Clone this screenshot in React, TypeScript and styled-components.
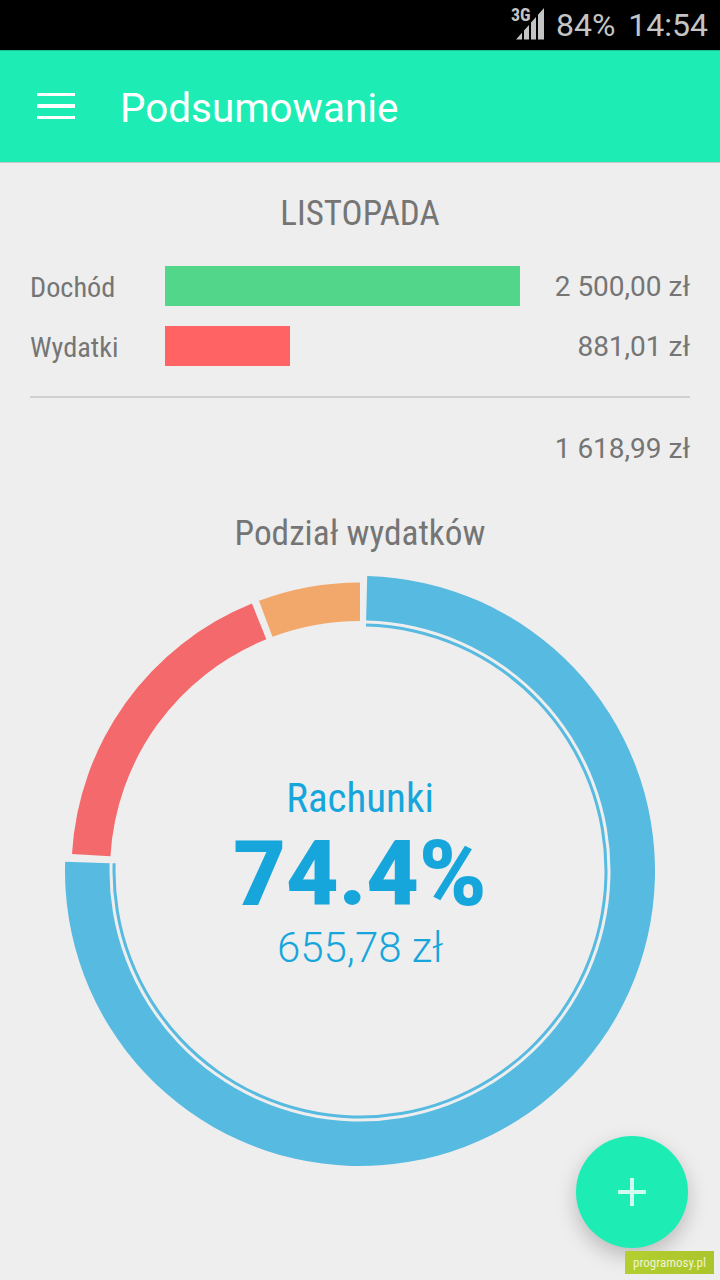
import React from "react";
import styled, { createGlobalStyle } from "styled-components";

const Global = createGlobalStyle`
  html, body { margin: 0; padding: 0; background: #eeeeee; }
  body { font-family: Roboto, "Liberation Sans", sans-serif; }
`;

const Screen = styled.div`
  position: relative;
  width: 720px;
  height: 1280px;
  overflow: hidden;
  background: #eeeeee;
  display: flex;
  flex-direction: column;
`;

const StatusBar = styled.div`
  height: 50px;
  background: #000;
  color: #c4c4c4;
  display: flex;
  align-items: center;
  justify-content: flex-end;
  padding-right: 12px;
  font-size: 32px;
  flex: none;
`;
const StatusGroup = styled.div`
  display: flex;
  align-items: center;
  gap: 13px;
`;
const SignalWrap = styled.div`
  position: relative;
  width: 45px;
  height: 36px;
  margin-right: -1px;
`;
const NetLabel = styled.span`
  position: absolute;
  left: 12px;
  top: -1px;
  font-size: 18px;
  line-height: 18px;
  font-weight: 700;
  font-stretch: condensed;
`;

const AppBar = styled.header`
  height: 113px;
  background: #1dedb5;
  border-bottom: 1px solid #c8c8c8;
  box-shadow: inset 0 1px 0 rgba(0, 0, 0, 0.18);
  box-sizing: border-box;
  display: flex;
  align-items: center;
  padding-left: 37px;
  gap: 46px;
  flex: none;
`;
const Burger = styled.div`
  width: 38px;
  display: flex;
  flex-direction: column;
  gap: 8px;
`;
const BurgerLine = styled.span`
  height: 3.33px;
  background: #fff;
`;
const Title = styled.h1`
  margin: 5px 0 0 -1px;
  color: #fff;
  font-size: 40.4px;
  font-weight: 400;
`;

const Content = styled.main`
  padding: 29px 30px 0;
  color: #757575;
  display: flex;
  flex-direction: column;
`;
const Heading = styled.div`
  text-align: center;
  font-size: 35px;
  line-height: 44px;
  font-stretch: condensed;
`;
const Rows = styled.div`
  margin-top: 30px;
  display: flex;
  flex-direction: column;
  gap: 20px;
  padding-bottom: 30px;
  border-bottom: 2px solid #d0d0d0;
`;
const Row = styled.div`
  display: flex;
  align-items: center;
  height: 40px;
`;
const RowLabel = styled.span`
  width: 135px;
  padding-top: 2px;
  font-size: 28.3px;
  font-stretch: condensed;
`;
const Bar = styled.div<{ $color: string }>`
  height: 40px;
  background: ${(p) => p.$color};
`;
const Amount = styled.span`
  margin-left: auto;
  font-size: 28px;
  font-weight: 400;
`;
const Total = styled.div`
  margin-top: 33px;
  text-align: right;
  font-size: 28px;
  font-weight: 400;
  line-height: 36px;
`;
const SubHeading = styled.div`
  margin-top: 44px;
  text-align: center;
  font-size: 35.3px;
  line-height: 44px;
  font-stretch: condensed;
`;

const DonutWrap = styled.div`
  position: relative;
  width: 600px;
  height: 600px;
  margin: 16px auto 0;
`;
const Center = styled.div`
  position: absolute;
  inset: 0;
  padding-top: 4px;
  box-sizing: border-box;
  display: flex;
  flex-direction: column;
  align-items: center;
  justify-content: center;
  color: #17a6db;
`;
const CenterLabel = styled.div`
  font-size: 41px;
  line-height: 44px;
  font-stretch: condensed;
`;
const Percent = styled.div`
  margin: 18px 0 16px;
  font-size: 91px;
  line-height: 72px;
  font-weight: 900;
`;
const CenterValue = styled.div`
  font-size: 42px;
  line-height: 44px;
  font-weight: 300;
`;

const Fab = styled.button`
  position: absolute;
  left: 576px;
  top: 1136px;
  width: 112px;
  height: 112px;
  border: 0;
  border-radius: 50%;
  background: #1dedb5;
  box-shadow: 0 8px 20px rgba(0, 0, 0, 0.22);
  display: flex;
  align-items: center;
  justify-content: center;
  padding: 0;
`;
const Watermark = styled.div`
  position: absolute;
  left: 625px;
  top: 1251px;
  width: 89px;
  height: 23px;
  background: linear-gradient(100deg, #b4cf2f, #aac42c);
  color: #eef4d0;
  font-size: 13px;
  line-height: 23px;
  text-align: center;
  font-stretch: condensed;
`;

const CX = 300;
const CY = 300;
function pt(r: number, deg: number) {
  const a = ((deg - 90) * Math.PI) / 180;
  return `${(CX + r * Math.cos(a)).toFixed(2)} ${(CY + r * Math.sin(a)).toFixed(2)}`;
}
function arc(ro: number, ri: number, a0: number, a1: number) {
  const large = a1 - a0 > 180 ? 1 : 0;
  return `M${pt(ro, a0)}A${ro} ${ro} 0 ${large} 1 ${pt(ro, a1)}L${pt(ri, a1)}A${ri} ${ri} 0 ${large} 0 ${pt(ri, a0)}Z`;
}

function Donut() {
  return (
    <svg width="600" height="600" viewBox="0 0 600 600">
      <path d={arc(295, 250.5, 1.4, 271.8)} fill="#57bae0" />
      <path d={arc(247.5, 244.5, 1.4, 271.8)} fill="#57bae0" />
      <path d={arc(288.5, 250, 273.4, 338)} fill="#f4696b" />
      <path d={arc(288.5, 250, 339.5, 360)} fill="#f3a86b" />
    </svg>
  );
}

export default function App() {
  return (
    <Screen>
      <Global />
      <StatusBar>
        <StatusGroup>
          <SignalWrap>
            <NetLabel>3G</NetLabel>
            <svg width="45" height="36" viewBox="0 0 45 36">
              <path
                d="M17 32.5 L23 25.75 V32.5 Z M25 23.5 L30 17.9 V32.5 H25 Z M32 15.6 L37 10 V32.5 H32 Z M39 7.75 L45 1 V32.5 H39 Z"
                fill="#c4c4c4"
              />
            </svg>
          </SignalWrap>
          <span>84%</span>
          <span>14:54</span>
        </StatusGroup>
      </StatusBar>
      <AppBar>
        <Burger>
          <BurgerLine />
          <BurgerLine />
          <BurgerLine />
        </Burger>
        <Title>Podsumowanie</Title>
      </AppBar>
      <Content>
        <Heading>LISTOPADA</Heading>
        <Rows>
          <Row>
            <RowLabel>Dochód</RowLabel>
            <Bar $color="#52d689" style={{ width: 355 }} />
            <Amount>2 500,00 zł</Amount>
          </Row>
          <Row>
            <RowLabel>Wydatki</RowLabel>
            <Bar $color="#ff6363" style={{ width: 125 }} />
            <Amount>881,01 zł</Amount>
          </Row>
        </Rows>
        <Total>1 618,99 zł</Total>
        <SubHeading>Podział wydatków</SubHeading>
        <DonutWrap>
          <Donut />
          <Center>
            <CenterLabel>Rachunki</CenterLabel>
            <Percent>74.4%</Percent>
            <CenterValue>655,78 zł</CenterValue>
          </Center>
        </DonutWrap>
      </Content>
      <Fab aria-label="Dodaj">
        <svg width="28" height="28" viewBox="0 0 28 28">
          <path d="M12 0h4v12H28v4H16V28h-4V16H0v-4h12z" fill="#d2fbef" />
        </svg>
      </Fab>
      <Watermark>programosy.pl</Watermark>
    </Screen>
  );
}
